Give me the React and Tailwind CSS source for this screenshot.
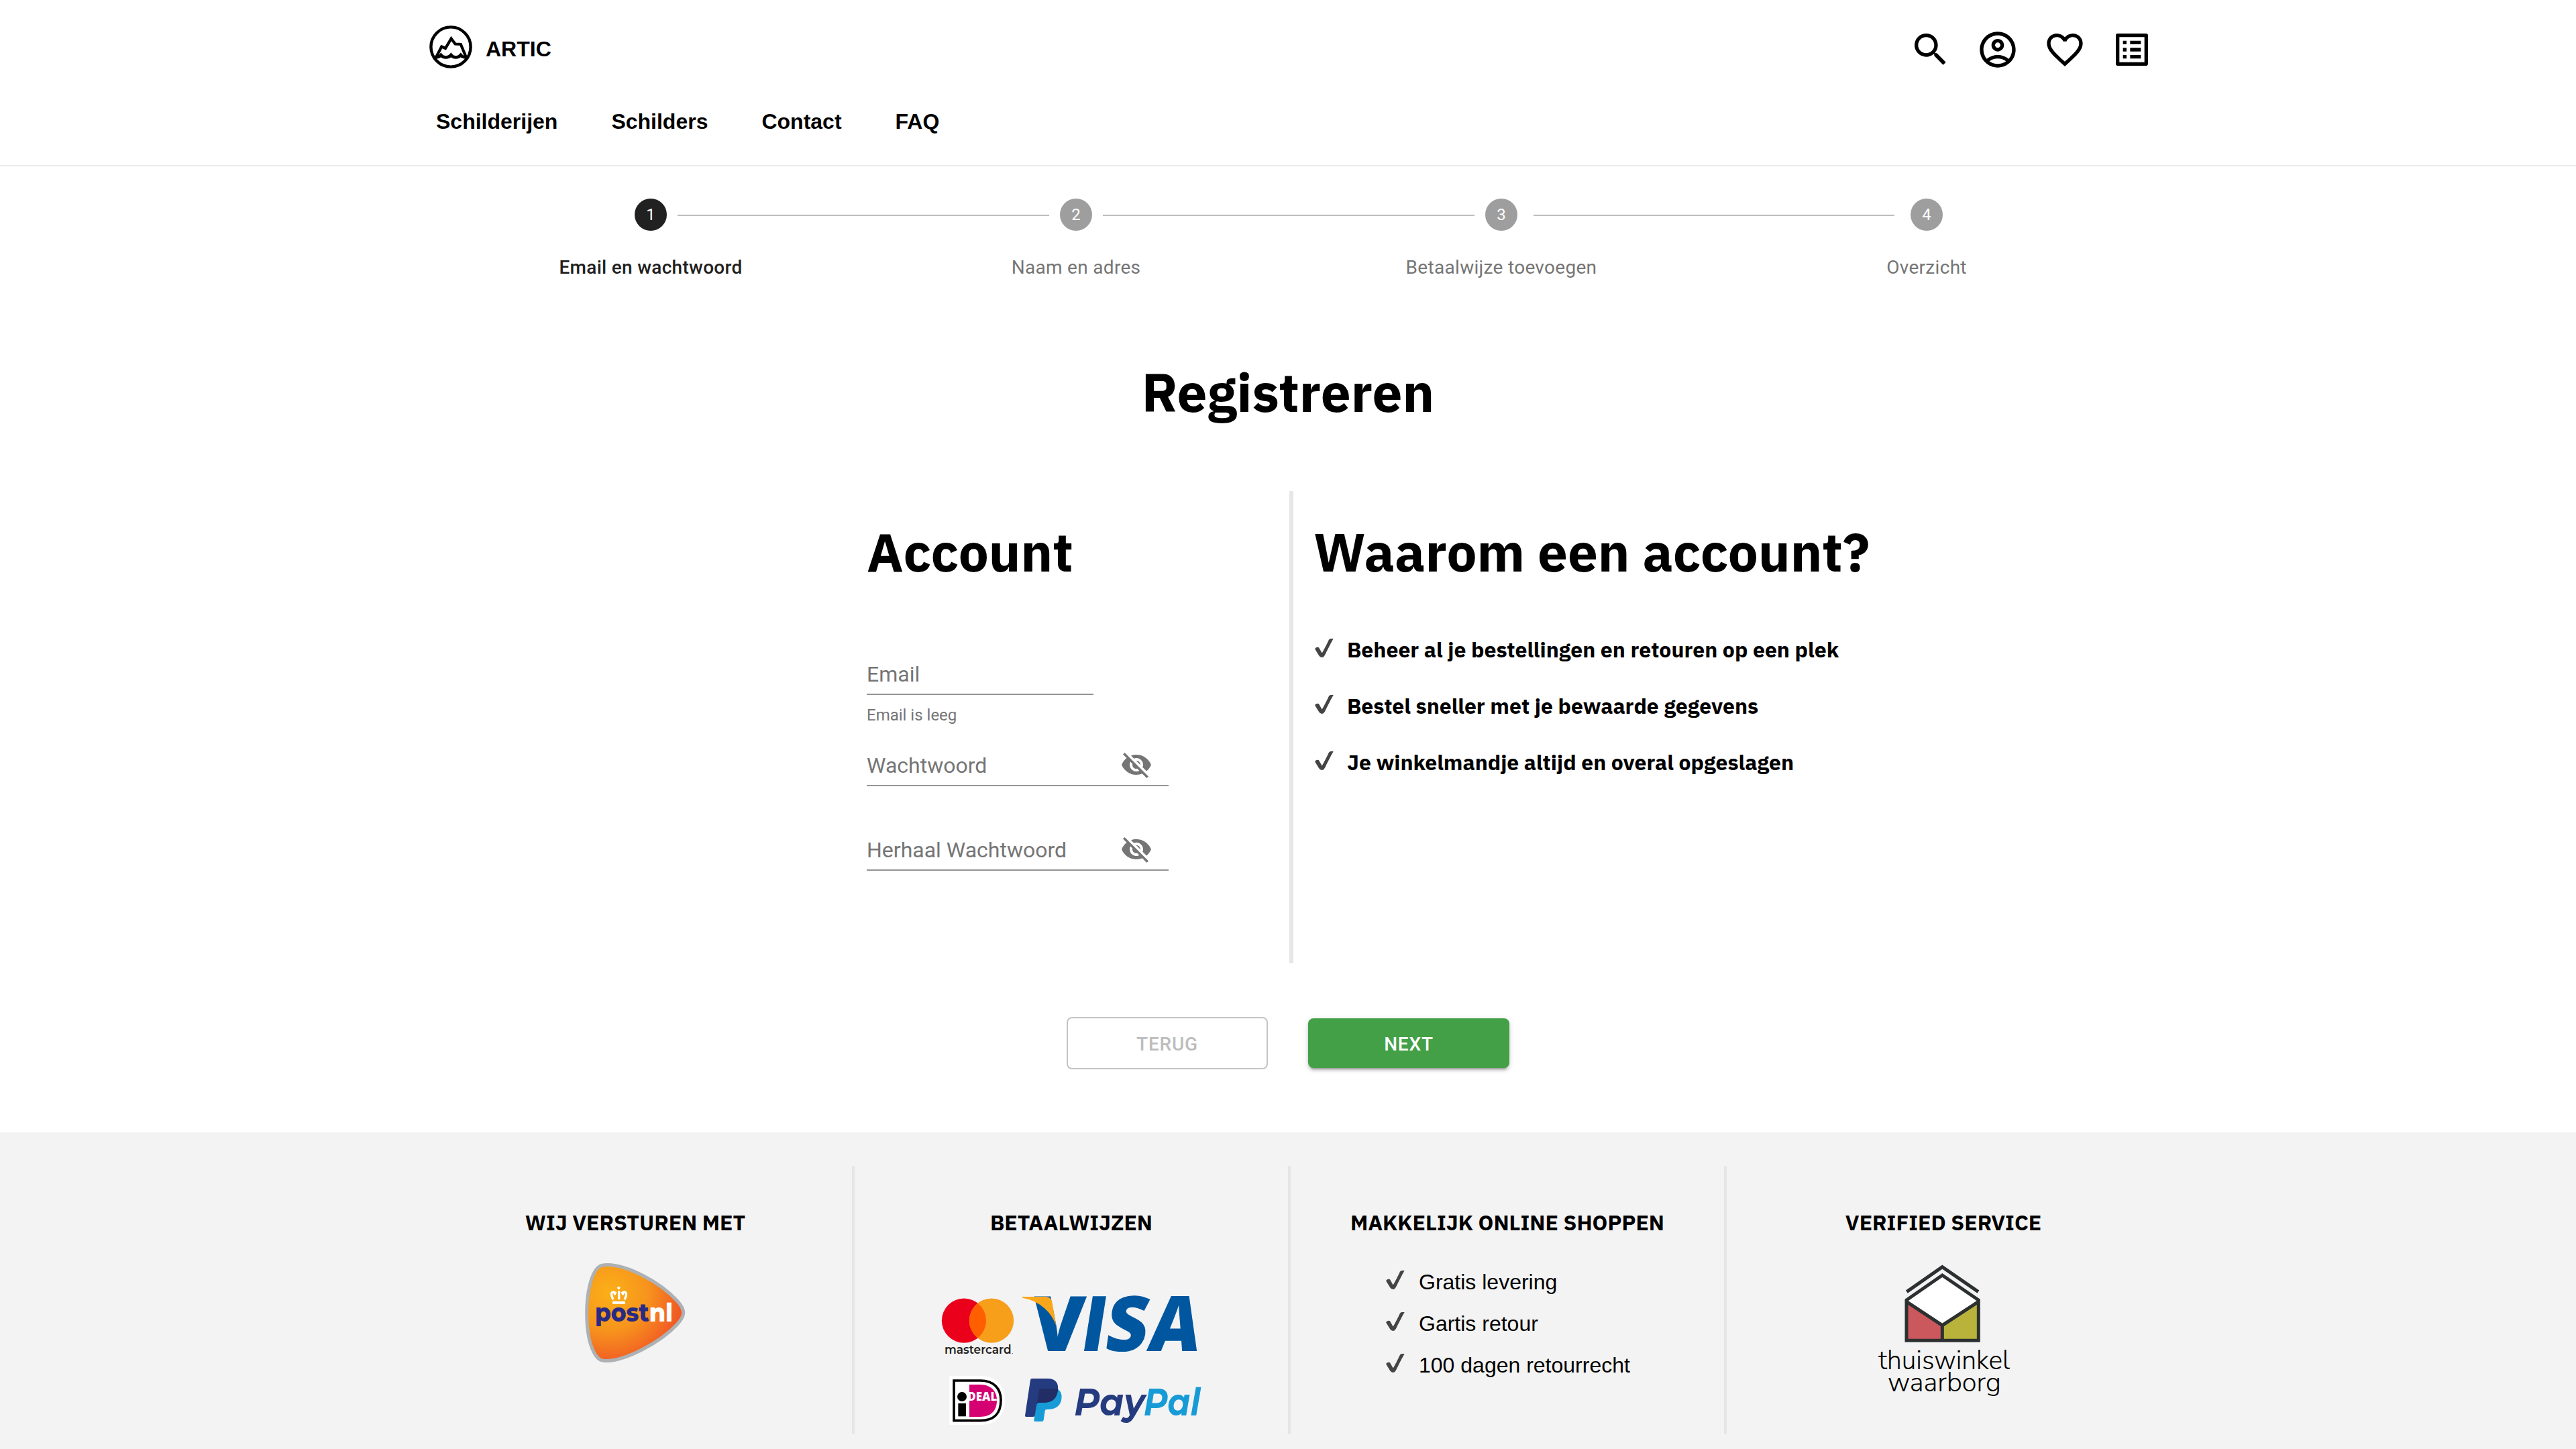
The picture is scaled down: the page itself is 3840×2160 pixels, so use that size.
import {
  MdSearch,
  MdOutlineAccountCircle,
  MdFavoriteBorder,
  MdListAlt,
  MdVisibilityOff,
} from "react-icons/md";

const STEPS = [
  { label: "Email en wachtwoord", left: "mr-4 bg-transparent", right: "ml-4 bg-[#bdbdbd]", active: true },
  { label: "Naam en adres", left: "mr-4 bg-[#bdbdbd]", right: "ml-4 bg-[#bdbdbd]" },
  { label: "Betaalwijze toevoegen", left: "mr-4 bg-[#bdbdbd]", right: "ml-6 bg-[#bdbdbd]" },
  { label: "Overzicht", left: "mr-6 bg-[#bdbdbd]", right: "ml-4 bg-transparent" },
];

const REASONS = [
  "Beheer al je bestellingen en retouren op een plek",
  "Bestel sneller met je bewaarde gegevens",
  "Je winkelmandje altijd en overal opgeslagen",
];

const PERKS = ["Gratis levering", "Gartis retour", "100 dagen retourrecht"];

function ArticLogo() {
  return (
    <svg className="h-16 w-16" viewBox="0 0 64 64" fill="none" stroke="#000">
      <circle cx="32" cy="32" r="29.6" strokeWidth="4.4" />
      <path d="M10.5 46.5 18.3 31.5 24 34 32.6 19.5 38.6 27.5 46.8 28 54.5 46.5" strokeWidth="4.2" />
      <path
        d="M7 47Q14 48.500 17.300 44Q20 47.500 24.500 47.500Q29.500 47.500 32.300 44Q35 47.500 39.500 47.500Q44 47.500 46.800 44Q50 48.500 57 47"
        strokeWidth="4.600"
      />
    </svg>
  );
}

function Check() {
  return (
    <svg className="h-7 w-7 shrink-0" viewBox="0 0 28 28" fill="#444">
      <path d="M.2 15.600C.3 13.300 5 11.600 6.400 13.900L10.700 21.500C14.500 15 18 8 20.800 2Q21.700 0 24 0H27.700C23 8 18.500 17.500 15 24.500Q13 28 10.400 28Q7.800 28 6 25Z" />
    </svg>
  );
}

function PostNL() {
  return (
    <svg className="h-[148px] w-[150px] overflow-visible" viewBox="96 308.500 450 444">
      <defs>
        <radialGradient id="pnl" gradientUnits="userSpaceOnUse" cx="205" cy="440" r="340">
          <stop offset="0" stopColor="#fbb017" />
          <stop offset="0.500" stopColor="#f7941d" />
          <stop offset="0.950" stopColor="#f15a24" />
        </radialGradient>
      </defs>
      <path
        d="M104 530C104 440 124 356 154 328C166 317 178 316 198 316C290 318 430 393 506 474C546 518 546 542 508 582C432 664 280 742 196 745C168 745 156 740 141 716C114 672 104 606 104 530Z"
        fill="url(#pnl)"
        stroke="#adb1b4"
        strokeWidth="15"
      />
      <g fill="none" stroke="#fff" strokeWidth="10">
        <path d="M248 433V471" />
        <path d="M222 471Q212 450 216 441Q222 434 232 441Q230 446 226 449" />
        <path d="M273 471Q284 450 279 441Q273 434 263 441Q265 446 269 449" />
        <path d="M219 485H276" strokeWidth="12" />
      </g>
      <path d="M247 411l8 8-8 8-8-8z" fill="#fff" />
      <g fontFamily="Montserrat, 'Open Sans', sans-serif" fontWeight="800" fontSize="114">
        <text x="141" y="570" fill="#282a85" textLength="242" lengthAdjust="spacingAndGlyphs">post</text>
        <text x="383" y="570" fill="#fff" textLength="106" lengthAdjust="spacingAndGlyphs">nl</text>
      </g>
    </svg>
  );
}

function Mastercard() {
  return (
    <svg className="h-[89px] w-[108px] overflow-visible" viewBox="72 153 324 267">
      <circle cx="171" cy="266" r="99.500" fill="#eb001b" />
      <circle cx="294" cy="266" r="99.500" fill="#f79e1b" />
      <path d="M232.500 188A99.500 99.500 0 0 1 232.500 344A99.500 99.500 0 0 1 232.500 188Z" fill="#ff5f00" />
      <text x="84" y="415" fill="#231f20" fontFamily="Montserrat, Lato, sans-serif" fontWeight="600" fontSize="56" textLength="299" lengthAdjust="spacingAndGlyphs">
        mastercard
      </text>
      <circle cx="387" cy="413" r="2" fill="#231f20" />
    </svg>
  );
}

function Visa() {
  return (
    <svg className="h-[89px] w-[262px] overflow-visible" viewBox="429 153 786 267">
      <g fill="#0057a0" fontFamily="'Open Sans', sans-serif" fontWeight="800" fontSize="343">
        <text transform="translate(467 403) skewX(-4)" textLength="236" lengthAdjust="spacingAndGlyphs">V</text>
        <text transform="translate(684 403) skewX(-9)" textLength="108" lengthAdjust="spacingAndGlyphs">I</text>
        <text transform="translate(792 403) skewX(-8)" textLength="190" lengthAdjust="spacingAndGlyphs">S</text>
        <text transform="translate(986 403) skewX(-9)" textLength="226" lengthAdjust="spacingAndGlyphs">A</text>
      </g>
      <path d="M432 159H535Q558 159 564 180L583 288Q565 240 533 212Q490 173 432 164Z" fill="#faa61a" />
    </svg>
  );
}

function Ideal() {
  return (
    <svg className="h-[73px] w-[83px]" viewBox="105 513 249 219">
      <path d="M106 514H245C318 514 354 560 354 622C354 690 315 732 245 732H106Z" fill="#fff" />
      <path d="M126 534H245C305 534 336 570 336 622C336 680 305 713 245 713H126Z" fill="none" stroke="#000" strokeWidth="11" />
      <path d="M195 552H243C295 552 318 585 318 622C318 668 293 696 243 696H195Z" fill="#d50172" />
      <circle cx="162" cy="606" r="21" />
      <path d="M145 636H180V694H145Z" />
      <text x="187" y="625" fill="#fff" fontFamily="'Open Sans', sans-serif" fontWeight="800" fontSize="52" textLength="132" lengthAdjust="spacingAndGlyphs">
        DEAL
      </text>
    </svg>
  );
}

function PayPal() {
  return (
    <svg className="h-[73px] w-[262px] overflow-visible" viewBox="444 513 786 219">
      <path
        d="M590 572C606 582 611 600 606 622C599 652 577 663 545 663H541Q534 663 533 670L527 710Q526 717 519 717H489Q483 717 484 711L500 600Z"
        fill="#179bd7"
      />
      <path
        d="M475 525H545C582 525 597 548 590 582C583 620 560 633 525 633H506Q498 633 496 641L488 690Q487 696 480 696H449Q443 696 444 690L468 531Q469 525 475 525Z"
        fill="#253b80"
      />
      <path d="M514 570H574Q586 570 591 574C588 618 562 633 525 633H506Q500 633 497 638L507 576Q508 570 514 570Z" fill="#222d65" />
      <g fontFamily="Montserrat, 'Open Sans', sans-serif" fontStyle="italic" fontWeight="700" fontSize="172">
        <text x="664" y="689" fill="#253b80" textLength="316" lengthAdjust="spacingAndGlyphs">Pay</text>
        <text x="974" y="689" fill="#179bd7" textLength="254" lengthAdjust="spacingAndGlyphs">Pal</text>
      </g>
    </svg>
  );
}

function Thuiswinkel() {
  return (
    <svg className="h-[200px] w-[194px] overflow-visible" viewBox="302 315 582 600">
      <path d="M588 363L744 477L588 584L432 477Z" fill="#fff" />
      <path d="M428 484L588 588V656H428Z" fill="#cb585d" />
      <path d="M750 484L588 588V656H750Z" fill="#bab33b" />
      <g fill="none" stroke="#2d3030" strokeWidth="15">
        <path d="M429 437L588 326L749 437" />
        <path d="M428 655V474L588 363L750 474V655Z" />
        <path d="M428 481L588 587L750 481M588 587V655" />
      </g>
      <g fontFamily="'Nunito Sans', Lato, sans-serif" fontWeight="300" fontSize="122" fill="#000">
        <text x="302" y="782" textLength="588" lengthAdjust="spacingAndGlyphs">thuiswinkel</text>
        <text x="344" y="883" textLength="507" lengthAdjust="spacingAndGlyphs">waarborg</text>
      </g>
    </svg>
  );
}

function Header() {
  return (
    <header className="h-[248px] border-b-2 border-[#ebebeb] font-['Liberation_Sans',Arial,sans-serif] text-[32px] font-bold leading-10 text-black">
      <div className="mx-auto w-[2560px] pt-[38px]">
        <div className="flex h-[68px] items-start justify-between">
          <a className="flex items-center gap-5">
            <ArticLogo />
            <span className="pt-1.5">ARTIC</span>
          </a>
          <div className="-mr-2.5 mt-1 flex gap-9 text-[64px]">
            <MdSearch />
            <MdOutlineAccountCircle />
            <MdFavoriteBorder />
            <MdListAlt />
          </div>
        </div>
        <nav className="mt-[55px] flex gap-20 pl-2.5">
          <a>Schilderijen</a>
          <a>Schilders</a>
          <a>Contact</a>
          <a>FAQ</a>
        </nav>
      </div>
    </header>
  );
}

function Stepper() {
  return (
    <ol className="ml-[653px] mt-12 grid w-[2536px] grid-cols-4 font-['Roboto',sans-serif]">
      {STEPS.map((s, i) => (
        <li key={s.label} className="flex flex-col items-center">
          <div className="flex w-full items-center">
            <div className="flex flex-1">
              <span className={"mt-0.5 h-0.5 flex-1 " + s.left} />
            </div>
            <span
              className={
                "flex h-12 w-12 items-center justify-center rounded-full text-2xl text-white " +
                (s.active ? "bg-[#212121]" : "bg-[#9e9e9e]")
              }
            >
              {i + 1}
            </span>
            <div className="flex flex-1">
              <span className={"mt-0.5 h-0.5 flex-1 " + s.right} />
            </div>
          </div>
          <span
            className={
              "mt-[35px] text-[28px] leading-10 tracking-[0.3px] " +
              (s.active ? "font-medium text-[#212121]" : "text-[#757575]")
            }
          >
            {s.label}
          </span>
        </li>
      ))}
    </ol>
  );
}

function PasswordField({ label, className }) {
  return (
    <div className={"flex h-14 w-[450px] items-start justify-between border-b-2 border-[#949494] pr-6 " + className}>
      <span className="pt-1.5 text-[32px] leading-[38px]">{label}</span>
      <MdVisibilityOff className="text-[48px]" />
    </div>
  );
}

function FooterColumn({ title, last, children }) {
  return (
    <section
      className={
        "flex w-[650px] flex-col items-center border-r-4 pt-16 " +
        (last ? "border-transparent" : "border-[#e6e6e6]")
      }
    >
      <h3 className="font-['IBM_Plex_Sans','Open_Sans',sans-serif] text-[32px] font-bold leading-10">{title}</h3>
      {children}
    </section>
  );
}

export default function App() {
  return (
    <div className="flex h-[2160px] w-[3840px] flex-col overflow-hidden bg-white text-black">
      <Header />
      <main className="flex flex-1 flex-col">
        <Stepper />
        <h1 className="mt-[117px] text-center font-['IBM_Plex_Sans','Open_Sans',sans-serif] text-[80px] font-bold leading-[96px]">
          Registreren
        </h1>
        <div className="ml-[1292px] mt-[100px] flex h-[704px]">
          <section className="w-[636px] border-r-[6px] border-[#e6e6e6] pt-[42px]">
            <h2 className="font-['IBM_Plex_Sans','Open_Sans',sans-serif] text-[80px] font-bold leading-[96px]">Account</h2>
            <div className="mt-[116px] font-['Roboto',sans-serif] text-[#757575]">
              <div className="w-[338px] border-b-2 border-[#949494] pb-2.5 text-[32px] leading-[38px]">Email</div>
              <p className="mt-2.5 text-2xl leading-10">Email is leeg</p>
              <PasswordField label="Wachtwoord" className="mt-[30px]" />
              <PasswordField label="Herhaal Wachtwoord" className="mt-[70px]" />
            </div>
          </section>
          <section className="pl-[30px] pt-[42px] font-['IBM_Plex_Sans','Open_Sans',sans-serif] font-bold">
            <h2 className="text-[80px] leading-[96px]">Waarom een account?</h2>
            <ul className="mt-[78px] flex flex-col gap-11 pl-0.5 text-[32px] leading-10">
              {REASONS.map((r) => (
                <li key={r} className="flex gap-5">
                  <span className="pt-1"><Check /></span>
                  {r}
                </li>
              ))}
            </ul>
          </section>
        </div>
        <div className="mt-20 flex items-center justify-center gap-[60px] font-['Roboto',sans-serif] text-[28px] font-medium tracking-[0.8px]">
          <button className="h-[78px] w-[300px] rounded-lg border-2 border-[#c4c4c4] pt-[3px] text-[#bdbdbd]">TERUG</button>
          <button className="h-[74px] w-[300px] rounded-lg bg-[#43a047] pt-[3px] text-white shadow-[0_6px_2px_-4px_rgba(0,0,0,0.2),0_4px_4px_0_rgba(0,0,0,0.14),0_2px_10px_0_rgba(0,0,0,0.12)]">
            NEXT
          </button>
        </div>
      </main>
      <footer className="h-[472px] bg-[#f3f3f3] pl-[624px] pt-[50px]">
        <div className="flex h-[400px]">
          <FooterColumn title="WIJ VERSTUREN MET">
            <div className="mt-[41px]"><PostNL /></div>
          </FooterColumn>
          <FooterColumn title="BETAALWIJZEN">
            <div className="mt-[89px] flex w-[386px] flex-col gap-[31px]">
              <div className="flex gap-[11px]">
                <Mastercard />
                <Visa />
              </div>
              <div className="flex gap-[30px] pl-[11px]">
                <Ideal />
                <PayPal />
              </div>
            </div>
          </FooterColumn>
          <FooterColumn title="MAKKELIJK ONLINE SHOPPEN">
            <ul className="ml-[142px] mt-[49px] flex flex-col gap-[22px] self-start font-['Liberation_Sans',Arial,sans-serif] text-[32px] leading-10">
              {PERKS.map((p) => (
                <li key={p} className="flex gap-[21px]">
                  <span className="pt-[3px]"><Check /></span>
                  {p}
                </li>
              ))}
            </ul>
          </FooterColumn>
          <FooterColumn title="VERIFIED SERVICE" last>
            <div className="mt-[43px]"><Thuiswinkel /></div>
          </FooterColumn>
        </div>
      </footer>
    </div>
  );
}
